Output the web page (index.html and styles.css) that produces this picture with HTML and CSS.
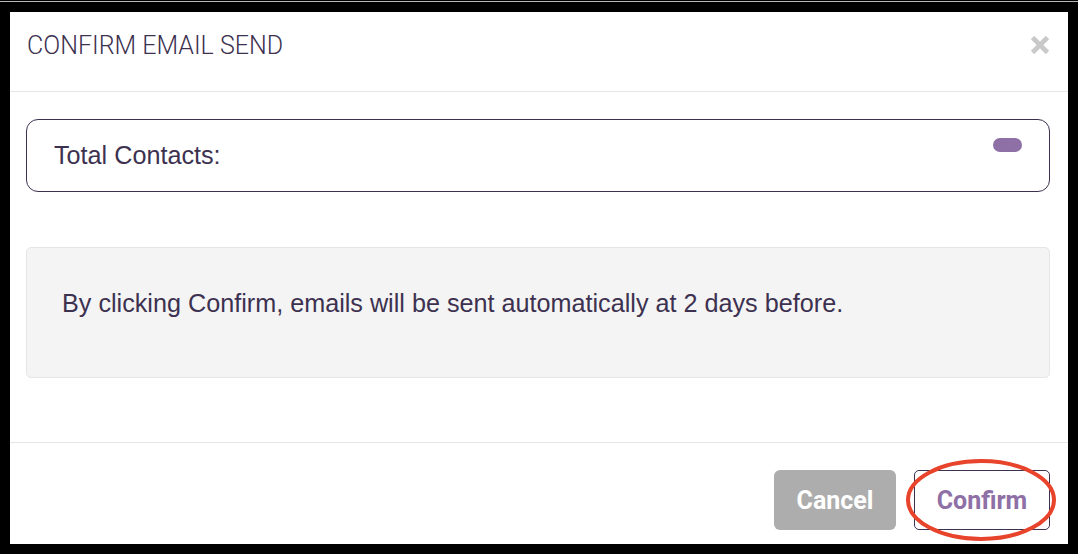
FILE: index.html
```html
<!DOCTYPE html>
<html>
<head>
<meta charset="utf-8">
<title>Confirm Email Send</title>
<link rel="stylesheet" href="styles.css">
</head>
<body>
<div class="strip"></div>
<div class="modal">
  <div class="modal-header">
    <h2 class="modal-title">CONFIRM EMAIL SEND</h2>
    <button class="close" aria-label="Close">
      <svg width="20" height="20" viewBox="0 0 20 20"><path d="M2.5 2.5 L17.5 17.5 M17.5 2.5 L2.5 17.5" stroke="#c9c9c9" stroke-width="4.6" stroke-linecap="butt"/></svg>
    </button>
  </div>
  <div class="modal-body">
    <div class="contacts">
      <span class="contacts-label">Total Contacts:</span>
      <span class="badge"></span>
    </div>
    <div class="notice">
      <p>By clicking Confirm, emails will be sent automatically at 2 days before.</p>
    </div>
  </div>
  <div class="modal-footer">
    <button class="btn btn-cancel">Cancel</button>
    <button class="btn btn-confirm">Confirm</button>
    <svg class="annotation" width="156" height="86" viewBox="0 0 156 86"><ellipse cx="78" cy="43" rx="73" ry="39" fill="none" stroke="#e8432b" stroke-width="4"/></svg>
  </div>
</div>
</body>
</html>
```
FILE: styles.css
```css
html, body {
  margin: 0;
  padding: 0;
  background: #000;
}
body {
  width: 1078px;
  height: 554px;
  overflow: hidden;
  padding-top: 1px;
  box-sizing: border-box;
}
.strip {
  height: 1px;
  background: #b9b9b9;
}
.modal {
  margin: 10px 10px 0 10px;
  width: 1058px;
  height: 532px;
  background: #fff;
  display: flex;
  flex-direction: column;
  color: #3d3150;
}
.modal-header {
  height: 80px;
  box-sizing: border-box;
  border-bottom: 1px solid #e6e6e6;
  padding: 19px 18px 0 17px;
  display: flex;
  justify-content: space-between;
  align-items: flex-start;
}
.modal-title {
  margin: 0;
  font-family: Roboto, "Liberation Sans", sans-serif;
  font-weight: 300;
  font-size: 25px;
  line-height: 30px;
  color: #3d3150;
}
.close {
  border: 0;
  background: none;
  padding: 0;
  margin-top: 4px;
  width: 20px;
  height: 20px;
  display: block;
}
.close svg { display: block; }
.modal-body {
  padding: 27px 18px 0 16px;
  height: 351px;
  box-sizing: border-box;
  border-bottom: 1px solid #e6e6e6;
}
.contacts {
  height: 73px;
  box-sizing: border-box;
  border: 1px solid #3d3150;
  border-radius: 12px;
  padding: 18px 27px 0 27px;
  display: flex;
  justify-content: space-between;
  align-items: flex-start;
}
.contacts-label {
  font-family: "Liberation Sans", Arial, sans-serif;
  font-size: 25.2px;
  line-height: 30px;
  margin-top: 2px;
}
.badge {
  width: 29px;
  height: 14px;
  border-radius: 7px;
  background: #8e70a6;
}
.notice {
  margin-top: 55px;
  height: 131px;
  box-sizing: border-box;
  background: #f4f4f4;
  border: 1px solid #e6e6e6;
  border-radius: 5px;
  padding: 40px 35px 0 35px;
}
.notice p {
  margin: 0;
  font-family: "Liberation Sans", Arial, sans-serif;
  font-size: 25.2px;
  line-height: 30px;
}
.modal-footer {
  position: relative;
  flex: 1;
  display: flex;
  justify-content: flex-end;
  align-items: flex-start;
  gap: 18px;
  padding: 27px 18px 0 0;
}
.btn {
  height: 60px;
  box-sizing: border-box;
  font-family: Roboto, "Liberation Sans", sans-serif;
  font-weight: 700;
  font-size: 25px;
  padding: 0;
  cursor: pointer;
}
.btn-cancel {
  width: 122px;
  background: #adadad;
  color: #fff;
  border: 0;
  border-radius: 6px;
}
.btn-confirm {
  width: 136px;
  background: #fff;
  color: #8e70a6;
  border: 1px solid #3d3150;
  border-radius: 5px;
}
.annotation {
  position: absolute;
  left: 893px;
  top: 14px;
}
```
